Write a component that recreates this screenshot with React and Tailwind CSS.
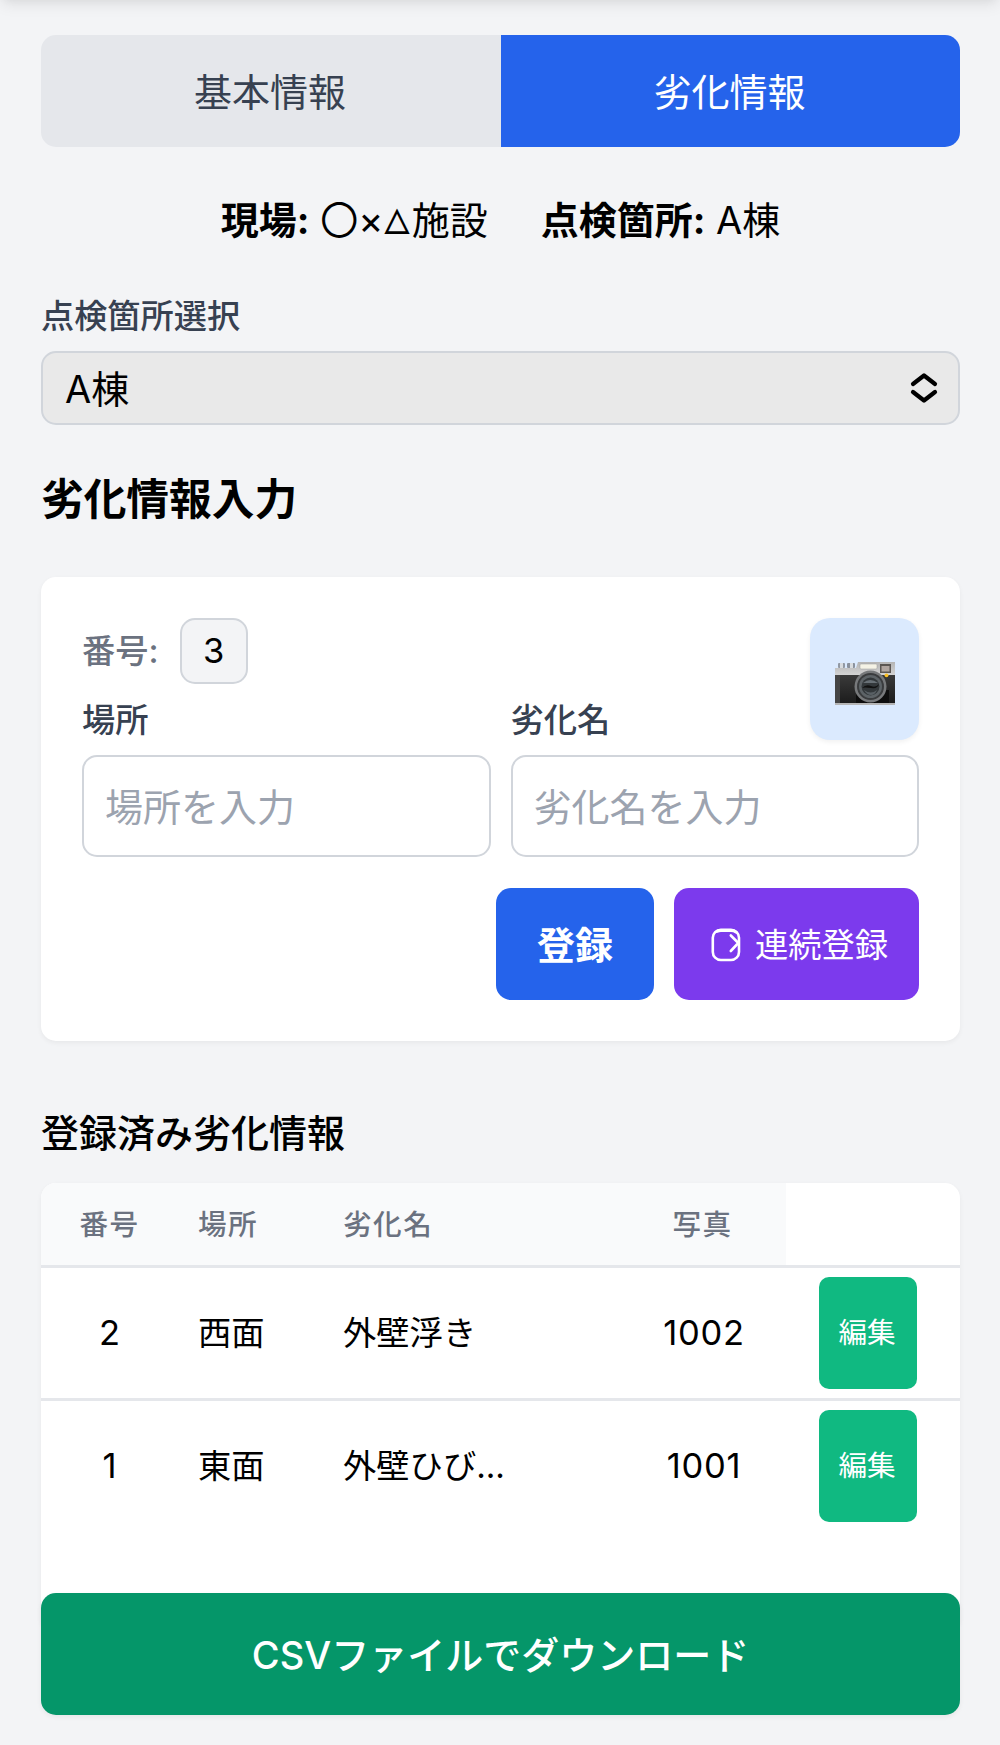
import React, { useState } from 'react';

const records = [
  { id: 2, location: '西面', name: '外壁浮き', photo: '1002' },
  { id: 1, location: '東面', name: '外壁ひび...', photo: '1001' },
];

const CameraIcon = () => (
  <svg width="60" height="43" viewBox="0 0 60 43">
    <defs>
      <linearGradient id="body" x1="0" y1="0" x2="0" y2="1">
        <stop offset="0" stopColor="#3a3a3a" />
        <stop offset="1" stopColor="#1c1c1c" />
      </linearGradient>
      <linearGradient id="top" x1="0" y1="0" x2="0" y2="1">
        <stop offset="0" stopColor="#b4b4b4" />
        <stop offset="1" stopColor="#d6d6d6" />
      </linearGradient>
    </defs>
    <path d="M0 6H21L23 0H60V14H0Z" fill="url(#top)" />
    <rect x="3" y="1" width="7" height="5" rx="1" fill="#9299a3" />
    <rect x="5" y="1" width="3" height="5" fill="#d8dce0" />
    <rect x="12" y="1" width="8" height="5" rx="1" fill="#8b929d" />
    <rect x="15" y="1" width="3" height="5" fill="#d8dce0" />
    <rect y="13" width="60" height="28" fill="url(#body)" />
    <rect x="0" y="13" width="5" height="28" fill="#444" />
    <rect x="21" y="28" width="33" height="13" fill="#0d0d0d" />
    <rect y="41" width="60" height="2" fill="#b5b5b5" />
    <rect x="25" y="2" width="17" height="5" rx="1" fill="#f5f3e6" stroke="#999" strokeWidth=".5" />
    <rect x="45" y="2" width="11" height="9" fill="#5b5652" />
    <rect x="46.5" y="4" width="8" height="5.5" fill="#b0a59f" />
    <circle cx="35.5" cy="24.5" r="16" fill="#77797b" />
    <circle cx="35.5" cy="24.5" r="13.5" fill="#3a3c3e" />
    <circle cx="35.5" cy="24.5" r="11.5" fill="#5d6367" />
    <circle cx="35.5" cy="24.5" r="9" fill="#33383b" />
    <path d="M28 21q7-6 15 0z" fill="#687076" />
    <path d="M27 26q4-4 9-2t8-2q-1 5-8 4t-9 0z" fill="#111" />
    <path d="M29 28q7 5 13 0-2 5-6 5t-7-5z" fill="#596065" />
    <circle cx="51.5" cy="13.3" r="1.9" fill="#fbbf24" />
  </svg>
);

const ContinueIcon = () => (
  <svg width="30" height="34" viewBox="0 0 30 34" fill="none" stroke="currentColor" strokeLinecap="round" strokeLinejoin="round">
    <rect x="1.8" y="1.8" width="26.2" height="30.2" rx="8" strokeWidth="2.6" />
    <path d="M6 3.4Q8 2.6 10 2.6H20Q23 2.6 25 4.2" strokeWidth="3" />
    <path d="M19.8 7.5L27.3 15L19.8 23" strokeWidth="2.6" />
  </svg>
);

const App = () => {
  const [tab, setTab] = useState('damage');
  const [location, setLocation] = useState('');
  const [damageName, setDamageName] = useState('');

  const tabClass = (name) =>
    tab === name ? 'bg-blue-600 text-white' : 'bg-gray-200 text-gray-700';

  return (
    <div className="relative h-[1745px] overflow-hidden bg-[#f3f4f6] pr-[40px] pl-[41px] pt-[35px] font-[Inter,'Noto_Sans_CJK_JP',sans-serif] text-[38px] leading-[56px] text-black [--color-blue-600:#2563eb] [--color-gray-200:#e5e7eb] [--color-gray-300:#d1d5db] [--color-gray-400:#9ca3af] [--color-gray-500:#6b7280] [--color-gray-700:#374151]">
      <div className="absolute inset-x-0 -top-20 h-20 shadow-[0_5px_15px_-2px_rgba(0,0,0,0.1),0_3px_10px_-5px_rgba(0,0,0,0.06)]" />

      <div className="flex h-28 overflow-hidden rounded-[15px]">
        <button onClick={() => setTab('basic')} className={`w-[460px] pt-[2px] pr-[2px] ${tabClass('basic')}`}>基本情報</button>
        <button onClick={() => setTab('damage')} className={`flex-1 pt-[2px] pr-[2px] ${tabClass('damage')}`}>劣化情報</button>
      </div>

      <div className="mt-[45px] flex h-[56px] justify-center gap-[53px] whitespace-nowrap">
        <span><strong className="font-bold">現場:</strong> 〇×<span className="-mr-[5px] inline-block origin-left scale-x-[.84] text-[33px] leading-none">△</span>施設</span>
        <span><strong className="font-bold">点検箇所:</strong> A棟</span>
      </div>

      <label className="mt-[44px] block text-[33.2px] leading-[48px] font-medium text-gray-700">点検箇所選択</label>
      <div className="relative mt-[11px]">
        <select className="block h-[74px] w-full appearance-none rounded-[15px] border-2 border-gray-300 bg-[#e9e9e9] px-[22px] pt-[2px]">
          <option>A棟</option>
        </select>
        <svg className="pointer-events-none absolute top-[21px] right-[22px]" width="28" height="32" viewBox="0 0 28 32" fill="none" stroke="#000" strokeWidth="4.2" strokeLinecap="round" strokeLinejoin="round">
          <path d="M3 12L14 3.5L25 12M3 20L14 28.5L25 20" />
        </svg>
      </div>

      <h2 className="mt-[45px] text-[42.7px] leading-[60px] font-bold">劣化情報入力</h2>

      <div className="mt-[47px] h-[464px] rounded-[15px] bg-white p-[41px] shadow-[0_2px_5px_rgba(0,0,0,0.05)]">
        <div className="flex h-[81px] items-start justify-between">
          <div className="flex h-[66px] items-center text-[33.3px]">
            <span className="font-medium text-gray-500">番号:</span>
            <span className="ml-[21px] flex h-[66px] w-[68px] items-center justify-center rounded-[15px] border-2 border-gray-300 bg-gray-100 text-[34.5px]">3</span>
          </div>
          <button className="flex h-[122px] w-[109px] shrink-0 items-center justify-center rounded-[20px] bg-[#dbeafe] pt-[9px] shadow-[0_2px_5px_rgba(0,0,0,0.06)]" title="写真">
            <CameraIcon />
          </button>
        </div>
        <div className="grid grid-cols-2 gap-x-5">
          <div>
            <label className="block text-[33.3px] leading-[42px] font-medium text-gray-700">場所</label>
            <input value={location} onChange={(e) => setLocation(e.target.value)} placeholder="場所を入力" className="mt-[14px] block h-[102px] w-full rounded-[15px] border-2 border-gray-300 bg-white px-[21px] pt-[2px] placeholder:text-gray-400" />
          </div>
          <div>
            <label className="block text-[33.3px] leading-[42px] font-medium text-gray-700">劣化名</label>
            <input value={damageName} onChange={(e) => setDamageName(e.target.value)} placeholder="劣化名を入力" className="mt-[14px] block h-[102px] w-full rounded-[15px] border-2 border-gray-300 bg-white px-[21px] pt-[2px] placeholder:text-gray-400" />
          </div>
        </div>
        <div className="mt-[31px] flex justify-end gap-5">
          <button className="h-28 w-[158px] rounded-[15px] bg-blue-600 pt-[2px] font-bold text-white">登録</button>
          <button className="flex h-28 w-[245px] items-center justify-center gap-[14px] rounded-[15px] bg-[#7c3aed] pt-[2px] pl-[6px] text-[33.3px] text-white">
            <ContinueIcon />
            <span>連続登録</span>
          </button>
        </div>
      </div>

      <h3 className="mt-[64px] font-medium">登録済み劣化情報</h3>

      <div className="mt-[22px] h-[440px] overflow-hidden rounded-t-[15px] bg-white shadow-[0_2px_5px_rgba(0,0,0,0.05)]">
        <table className="w-full table-fixed text-left">
          <colgroup>
            <col className="w-[137px]" />
            <col className="w-[145px]" />
            <col className="w-[302px]" />
            <col className="w-[161px]" />
            <col />
          </colgroup>
          <thead>
            <tr className="h-[83px] border-b-[3px] border-gray-200 text-[28.6px] leading-10 tracking-[1.5px] text-gray-500">
              <th className="bg-gray-50 pt-[2px] text-center font-medium">番号</th>
              <th className="bg-gray-50 pt-[2px] pl-[20px] font-medium">場所</th>
              <th className="bg-gray-50 pt-[2px] pl-[20px] font-medium">劣化名</th>
              <th className="bg-gray-50 pt-[2px] pr-[6px] text-center font-medium">写真</th>
              <th></th>
            </tr>
          </thead>
          <tbody className="text-[33.3px]">
            {records.map((rec) => (
              <tr key={rec.id} className="h-[133px] border-b-[3px] border-gray-200 last:border-b-0">
                <td className="text-center text-[34.5px]">{rec.id}</td>
                <td className="pl-[20px]">{rec.location}</td>
                <td className="pl-[20px]">{rec.name}</td>
                <td className="pr-[3px] text-center text-[34.5px] tracking-[0.7px]">{rec.photo}</td>
                <td className="pl-[33px]">
                  <button className="block h-28 w-[98px] rounded-[10px] bg-[#10b981] pr-[2px] text-[28.6px] text-white">編集</button>
                </td>
              </tr>
            ))}
          </tbody>
        </table>
      </div>

      <button className="relative -mt-[30px] block h-[122px] w-full rounded-[15px] bg-[#059669] pt-[2px] font-medium text-white shadow-[0_2px_5px_rgba(0,0,0,0.06)]">
        CSVファイルでダウンロード
      </button>
    </div>
  );
};

export default App;
